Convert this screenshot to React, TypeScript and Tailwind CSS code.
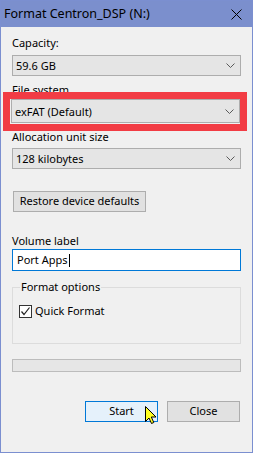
import React from "react";

const Chevron = () => (
  <svg width="9" height="5" viewBox="0 0 9 5" className="block">
    <path d="M0.5 0.5 L4.5 4.5 L8.5 0.5" fill="none" stroke="#5a5a5a" strokeWidth="1" />
  </svg>
);

const Select = ({ value, h = "h-[21px]" }: { value: string; h?: string }) => (
  <div className={`${h} w-full bg-[#e5e5e5] border border-[#adadad] flex items-center justify-between pl-[3px] pr-[5px]`}>
    <span className="leading-none">{value}</span>
    <Chevron />
  </div>
);

export default function App() {
  return (
    <div
      className="relative w-[253px] h-[453px] border border-[#7b8fd0] bg-[#f0f0f0] flex flex-col text-black text-[11px]"
      style={{ fontFamily: '"Noto Sans", "Segoe UI", sans-serif' }}
    >
      <div className="h-[26px] shrink-0 bg-[#7b8fcd] flex items-center justify-between pl-[3px] pr-[10px]">
        <span className="text-[12.5px] leading-none">Format Centron_DSP (N:)</span>
        <svg width="11" height="11" viewBox="0 0 11 11" className="block">
          <path d="M0.5 0.5 L10.5 10.5 M10.5 0.5 L0.5 10.5" stroke="#000" strokeWidth="1" />
        </svg>
      </div>

      <div className="flex flex-col px-[11px]">
        <div className="mt-[8px] h-[16px] leading-[16px]">Capacity:</div>
        <div className="mt-[4px]">
          <Select value="59.6 GB" />
        </div>

        <div className="mt-[6px] h-[16px] leading-[16px]">File system</div>
        <div className="mt-[1px] -ml-[1px] w-[229px]">
          <Select value="exFAT (Default)" h="h-[24px]" />
        </div>

        <div className="mt-[6px] h-[16px] leading-[16px]">Allocation unit size</div>
        <div className="mt-[3px]">
          <Select value="128 kilobytes" />
        </div>

        <div className="mt-[22px] ml-[1px] w-[133px] h-[21px] bg-[#e1e1e1] border border-[#adadad] flex items-center justify-center">
          Restore device defaults
        </div>

        <div className="mt-[21px] h-[16px] leading-[16px]">Volume label</div>
        <div className="h-[22px] bg-white border border-[#0078d7] flex items-center pl-[4px]">
          <span>Port Apps</span>
          <span className="inline-block w-[1px] h-[13px] bg-black ml-[1px]" />
        </div>

        <div className="mt-[16px] relative h-[57px] border border-[#dcdcdc]">
          <div className="absolute -top-[9px] left-[7px] px-[1px] bg-[#f0f0f0] leading-[16px]">Format options</div>
          <div className="mt-[15px] ml-[6px] flex items-center gap-[3px]">
            <div className="w-[13px] h-[13px] bg-white border border-[#333] flex items-center justify-center">
              <svg width="11" height="11" viewBox="0 0 11 11" className="block">
                <path d="M1.5 5.5 L4 8.5 L9.5 1.5" fill="none" stroke="#222" strokeWidth="1.2" />
              </svg>
            </div>
            <span className="leading-[16px]">Quick Format</span>
          </div>
        </div>

        <div className="mt-[15px] h-[13px] bg-[#e6e6e6] border border-[#bcbcbc]" />

        <div className="mt-[29px] flex justify-end gap-[9px] pr-[1px]">
          <div className="w-[73px] h-[21px] bg-[#e5f1fb] border border-[#0078d7] flex items-center justify-center">
            Start
          </div>
          <div className="w-[73px] h-[21px] bg-[#e1e1e1] border border-[#adadad] flex items-center justify-center">
            Close
          </div>
        </div>
      </div>

      {/* red annotation box */}
      <div className="absolute left-[2px] top-[91px] w-[244px] h-[39px] border-[7px] border-[#f23c44] pointer-events-none" />

      {/* mouse cursor */}
      <svg
        width="13"
        height="19"
        viewBox="0 0 13 19"
        className="absolute left-[144px] top-[405px] pointer-events-none"
      >
        <path
          d="M0.5 0.5 L0.5 15.5 L4 12 L6.5 17.5 L8.8 16.5 L6.3 11 L11 11 Z"
          fill="#ffff22"
          stroke="#000"
          strokeWidth="1"
          strokeLinejoin="round"
        />
      </svg>
    </div>
  );
}
